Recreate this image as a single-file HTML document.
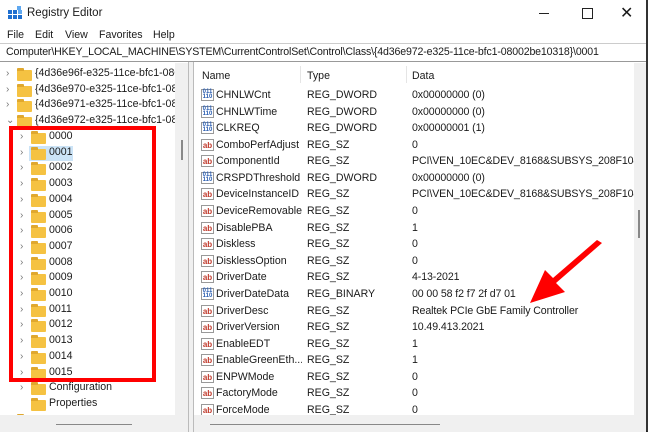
<!DOCTYPE html><html><head><style>
body{margin:0;width:648px;height:434px;overflow:hidden;background:#fff;font-family:"Liberation Sans",sans-serif;font-size:10.6px;color:#1a1a1a;position:relative}
.a{position:absolute;white-space:nowrap}
.c{position:absolute;overflow:hidden;white-space:nowrap}
.f{position:absolute;width:15px;height:11px;background:#f5c242;border-radius:1px}
.f:before{content:"";position:absolute;left:0;top:-2px;width:7px;height:3px;background:#e0a82e;border-radius:1px 1px 0 0}
.ch{position:absolute;color:#777;font-size:10px}
.ic{position:absolute;width:13px;height:12px;font-size:8px;font-weight:bold;line-height:11px;text-align:center;border:1px solid #999;box-sizing:border-box;background:#fff}
.ab{color:#c0392b}.bn{color:#2a5db0;font-size:6px;line-height:5px}
</style></head><body>
<div class="a" style="left:0;top:0;width:648px;height:432px;border-right:2px solid #333;border-bottom:2px solid #222;box-sizing:border-box"></div>
<svg class="a" style="left:8px;top:6px" width="14" height="14"><g fill="#1e6fd0"><rect x="0" y="4" width="4" height="4"/><rect x="5" y="4" width="4" height="4"/><rect x="0" y="9" width="4" height="4"/><rect x="5" y="9" width="4" height="4"/><rect x="10" y="9" width="4" height="4"/><rect x="10" y="4" width="4" height="4" fill="#5fa8f0"/><rect x="9" y="0" width="4" height="4" fill="#5fa8f0"/></g></svg>
<div class="a" style="left:27px;top:7px;font-size:11.5px">Registry Editor</div>
<div class="a" style="left:539px;top:13px;width:10px;height:1px;background:#222"></div>
<div class="a" style="left:582px;top:8px;width:9px;height:9px;border:1px solid #222"></div>
<div class="a" style="left:620px;top:3px;font-size:16px">✕</div>
<div class="a" style="left:7px;top:29px">File</div><div class="a" style="left:35px;top:29px">Edit</div><div class="a" style="left:65px;top:29px">View</div><div class="a" style="left:99px;top:29px">Favorites</div><div class="a" style="left:153px;top:29px">Help</div>
<div class="a" style="left:0;top:43px;width:646px;height:19px;border-top:1px solid #ccc;border-bottom:1px solid #999;box-sizing:border-box"></div>
<div class="a" style="left:6px;top:46px;letter-spacing:-0.15px">Computer\HKEY_LOCAL_MACHINE\SYSTEM\CurrentControlSet\Control\Class\{4d36e972-e325-11ce-bfc1-08002be10318}\0001</div>
<div class="c" style="left:0;top:63px;width:175px;height:352px"><div id="L"></div></div>
<div class="a" style="left:175px;top:63px;width:13px;height:352px;background:#f0f0f0"></div>
<div class="a" style="left:181px;top:140px;width:2px;height:20px;background:#888"></div>
<div class="a" style="left:0;top:415px;width:188px;height:17px;background:#f0f0f0"></div>
<div class="a" style="left:56px;top:424px;width:76px;height:1px;background:#888"></div>
<div class="a" style="left:188px;top:62px;width:6px;height:370px;background:#f0f0f0;border-left:1px solid #bbb;border-right:1px solid #bbb;box-sizing:border-box"></div>
<div class="a" style="left:634px;top:63px;width:12px;height:352px;background:#f0f0f0"></div>
<div class="a" style="left:638px;top:210px;width:2px;height:28px;background:#888"></div>
<div class="a" style="left:194px;top:415px;width:452px;height:17px;background:#f0f0f0"></div>
<div class="a" style="left:210px;top:424px;width:230px;height:1px;background:#888"></div>
<div class="a" style="left:300px;top:66px;width:1px;height:17px;background:#e5e5e5"></div>
<div class="a" style="left:406px;top:66px;width:1px;height:17px;background:#e5e5e5"></div>
<div class="a" style="left:202px;top:70px">Name</div><div class="a" style="left:307px;top:70px">Type</div><div class="a" style="left:412px;top:70px">Data</div>
<div class="c" style="left:194px;top:84px;width:440px;height:331px"><div id="R" style="position:relative;left:-194px;top:-84px"></div></div>
<div class="a" style="left:9px;top:126px;width:147px;height:256px;border:4px solid #f00;box-sizing:border-box"></div>
<svg class="a" style="left:0;top:0" width="648" height="434"><polygon points="597,240 602,243 556,283 565,292 530,303 545,270 553,278" fill="#f00"/></svg>
<script>
var L=document.getElementById('L'),h='';
var top4=['{4d36e96f-e325-11ce-bfc1-080','{4d36e970-e325-11ce-bfc1-080','{4d36e971-e325-11ce-bfc1-080','{4d36e972-e325-11ce-bfc1-080'];
for(var i=0;i<4;i++){var y=4+i*15.7;h+='<div class="ch" style="left:6px;top:'+(y+1)+'px">'+(i==3?'⌄':'›')+'</div><div class="f" style="left:17px;top:'+(y+3)+'px"></div><div class="a" style="left:35px;top:'+y+'px">'+top4[i]+'</div>';}
var kids=[];for(i=0;i<16;i++)kids.push(('000'+i).slice(-4));kids.push('Configuration');kids.push('Properties');
for(i=0;i<kids.length;i++){var y=67+i*15.7;if(i==1)h+='<div class="a" style="left:29px;top:'+(y)+'px;width:44px;height:15px;background:#cce4f7"></div>';
if(i<17)h+='<div class="ch" style="left:20px;top:'+(y+1)+'px">›</div>';h+='<div class="f" style="left:31px;top:'+(y+3)+'px"></div><div class="a" style="left:49px;top:'+y+'px">'+kids[i]+'</div>';}
h+='<div class="f" style="left:17px;top:'+(67+18*15.7+3)+'px"></div>';
L.innerHTML=h;
var R=[['CHNLWCnt','REG_DWORD','0x00000000 (0)'],['CHNLWTime','REG_DWORD','0x00000000 (0)'],['CLKREQ','REG_DWORD','0x00000001 (1)'],['ComboPerfAdjust','REG_SZ','0'],['ComponentId','REG_SZ','PCI\\VEN_10EC&amp;DEV_8168&amp;SUBSYS_208F1043&amp;'],['CRSPDThreshold','REG_DWORD','0x00000000 (0)'],['DeviceInstanceID','REG_SZ','PCI\\VEN_10EC&amp;DEV_8168&amp;SUBSYS_208F1043&amp;'],['DeviceRemovable','REG_SZ','0'],['DisablePBA','REG_SZ','1'],['Diskless','REG_SZ','0'],['DisklessOption','REG_SZ','0'],['DriverDate','REG_SZ','4-13-2021'],['DriverDateData','REG_BINARY','00 00 58 f2 f7 2f d7 01'],['DriverDesc','REG_SZ','Realtek PCIe GbE Family Controller'],['DriverVersion','REG_SZ','10.49.413.2021'],['EnableEDT','REG_SZ','1'],['EnableGreenEth...','REG_SZ','1'],['ENPWMode','REG_SZ','0'],['FactoryMode','REG_SZ','0'],['ForceMode','REG_SZ','0']];
h='';for(i=0;i<R.length;i++){var y=89+i*16.58;var s=R[i][1]=='REG_SZ';
h+='<div class="ic '+(s?'ab':'bn')+'" style="left:201px;top:'+(y)+'px">'+(s?'ab':'011<br>110')+'</div><div class="c" style="left:216px;top:'+y+'px;width:86px">'+R[i][0]+'</div><div class="a" style="left:307px;top:'+y+'px">'+R[i][1]+'</div><div class="a" style="left:412px;top:'+y+'px;letter-spacing:-0.1px">'+R[i][2]+'</div>';}
document.getElementById('R').innerHTML=h;
</script>
</body></html>
